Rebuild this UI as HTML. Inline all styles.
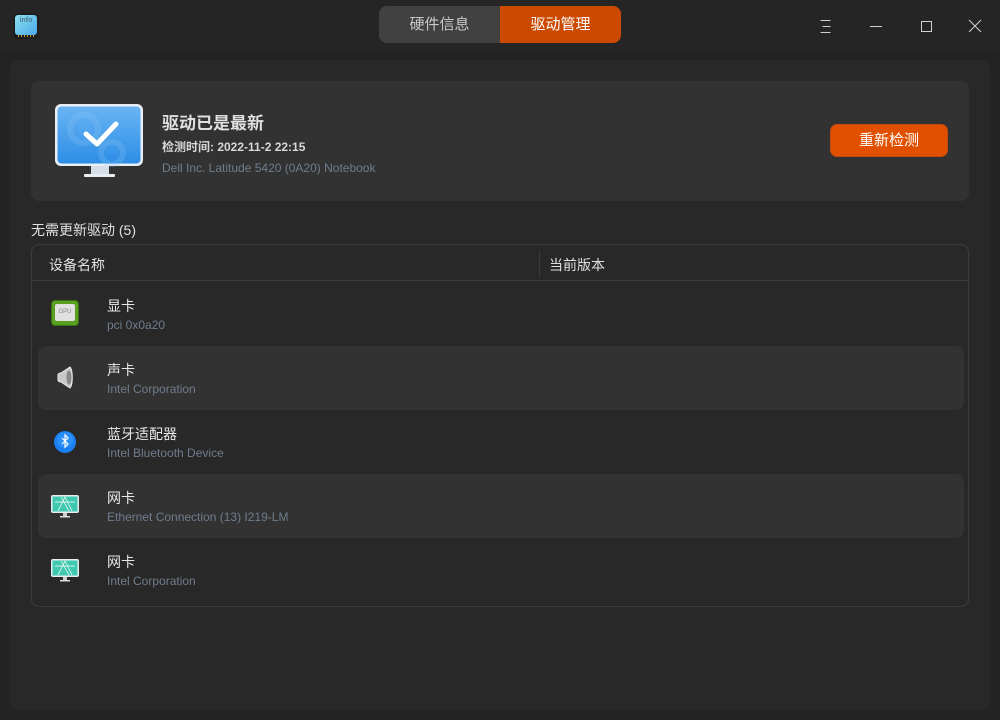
<!DOCTYPE html>
<html><head><meta charset="utf-8"><style>
*{margin:0;padding:0;box-sizing:border-box}
body{width:1000px;height:720px;background:#232323;font-family:"Liberation Sans","Noto Sans CJK SC",sans-serif;color:#dcdcdc;position:relative;overflow:hidden}
.tb{position:absolute;left:0;top:0;width:1000px;height:50px;background:#252525}
.panel{position:absolute;left:10px;top:60px;width:980px;height:650px;background:#282828;border-radius:8px}
.abs{position:absolute}
.seg{position:absolute;left:379px;top:6px;width:242px;height:37px;border-radius:8px;background:#414141;overflow:hidden}
.seg div{position:absolute;top:0;height:37px;line-height:37px;text-align:center;font-size:15px}
.card{position:absolute;left:31px;top:81px;width:938px;height:120px;background:#323232;border-radius:8px}
.btn{position:absolute;left:830px;top:124px;width:118px;height:33px;border-radius:7px;background:#e05000;border:1px solid #c04a10;color:#fff;font-size:15px;text-align:center;line-height:31px}
.tbl{position:absolute;left:31px;top:244px;width:938px;height:363px;border:1px solid #3d3d3d;border-radius:8px}
.row{position:absolute;left:6px;width:926px;height:64px;border-radius:8px}
.row.alt{background:#323232}
.n{position:absolute;left:69px;top:14px;font-size:14px;color:#e8e8e8}
.s{position:absolute;left:69px;top:36px;font-size:12px;color:#6f7d8e}
.ic{position:absolute;left:12px;top:16px;width:30px;height:30px}
</style></head><body>
<div class="tb"></div>
<div class="panel"></div>
<div class="abs" style="left:13px;top:13px;width:26px;height:26px;border-radius:5px;background:#1d1d1d"></div>
<div class="abs" style="left:15px;top:15px;width:22px;height:20px;border-radius:3px;background:linear-gradient(135deg,#8ee0f0,#4aa8e8);font-size:7px;color:#4a7a90;text-align:center;line-height:12px;font-weight:bold">info</div>
<div class="abs" style="left:18px;top:35px;width:16px;height:2px;background:repeating-linear-gradient(90deg,#c9a02a 0 1px,transparent 1px 3px)"></div>
<div class="seg"><div style="left:0;width:121px;color:#c8c8c8">硬件信息</div><div style="left:121px;width:121px;background:#cb4a00;color:#fff">驱动管理</div></div>
<svg class="abs" style="left:810px;top:15px" width="180" height="22" viewBox="0 0 180 22">
<g stroke="#d0d0d0" stroke-width="1" fill="none">
<path d="M10.5 5.5h10M12.5 11.5h8M10.5 17.5h10"/>
<path d="M60 11.5h12"/>
<rect x="111.5" y="6.5" width="10" height="10"/>
<path d="M159 5l12 12M171 5l-12 12"/>
</g></svg>
<div class="card"></div>
<svg class="abs" style="left:54px;top:103px" width="92" height="76" viewBox="0 0 92 76">
<defs><linearGradient id="g" x1="0" y1="0" x2="0" y2="1"><stop offset="0" stop-color="#6ab4f4"/><stop offset="1" stop-color="#2c8ee6"/></linearGradient></defs>
<rect x="1" y="1" width="88" height="62" rx="6" fill="#e8eef6"/>
<rect x="3.5" y="3.5" width="83" height="57" rx="4" fill="url(#g)"/>
<circle cx="30" cy="26" r="14" fill="none" stroke="#8cc4f4" stroke-width="6" opacity=".25"/>
<circle cx="58" cy="50" r="11" fill="none" stroke="#8cc4f4" stroke-width="6" opacity=".25"/>
<path d="M32 31l11 10 19-20" stroke="#fff" stroke-width="5" fill="none" stroke-linecap="round" stroke-linejoin="round"/>
<rect x="37" y="63" width="18" height="8" fill="#d8dee8"/>
<rect x="30" y="71" width="31" height="3" rx="1" fill="#e8eef6"/>
</svg>
<div class="abs" style="left:162px;top:109px;font-size:17px;font-weight:bold;color:#e0e0e0">驱动已是最新</div>
<div class="abs" style="left:162px;top:138px;font-size:12px;font-weight:bold;color:#d8d8d8">检测时间: 2022-11-2 22:15</div>
<div class="abs" style="left:162px;top:161px;font-size:12px;color:#6f7d8e">Dell Inc. Latitude 5420 (0A20) Notebook</div>
<div class="btn">重新检测</div>
<div class="abs" style="left:31px;top:220px;font-size:14px;color:#e0e0e0">无需更新驱动 (5)</div>
<div class="tbl">
<div class="abs" style="left:17px;top:10px;font-size:14px;color:#e0e0e0">设备名称</div>
<div class="abs" style="left:507px;top:6px;width:1px;height:26px;background:#3a3a3a"></div>
<div class="abs" style="left:517px;top:10px;font-size:14px;color:#e0e0e0">当前版本</div>
<div class="abs" style="left:0;top:35px;width:936px;height:1px;background:#3a3a3a"></div>
<div class="row" style="top:37px">
 <div class="ic"><div style="position:absolute;left:1px;top:2px;width:28px;height:26px;border-radius:4px;background:#5aa020;border:1px solid #3a7010"></div><div style="position:absolute;left:5px;top:6px;width:20px;height:17px;background:#e0e0e0;border-radius:2px;font-size:6px;color:#888;text-align:center;line-height:17px">GPU</div></div>
 <div class="n">显卡</div><div class="s">pci 0x0a20</div></div>
<div class="row alt" style="top:101px">
 <svg class="ic" viewBox="0 0 30 30"><path d="M8 13c0-1 1-2 3-2l9-6c3 3 3 18 0 21l-9-6c-2 0-3-1-3-2z" fill="#c8c8c8" stroke="#eee" stroke-width="1"/><ellipse cx="19" cy="15.5" rx="2.5" ry="7" fill="#888"/></svg>
 <div class="n">声卡</div><div class="s">Intel Corporation</div></div>
<div class="row" style="top:165px">
 <svg class="ic" viewBox="0 0 30 30"><circle cx="15" cy="16" r="11" fill="#1a7ff0"/><circle cx="15" cy="14" r="8" fill="#3ca0ff" opacity=".5"/><path d="M12 12l6 6-3 3v-12l3 3-6 6" stroke="#fff" stroke-width="1.2" fill="none"/></svg>
 <div class="n">蓝牙适配器</div><div class="s">Intel Bluetooth Device</div></div>
<div class="row alt" style="top:229px">
 <svg class="ic" viewBox="0 0 30 30"><rect x="1" y="5" width="28" height="18" rx="2" fill="#e8eef0"/><rect x="2.5" y="6.5" width="25" height="15" fill="#40c8b0"/><path d="M8 21l7-14 7 14M5 12h20M11 7l8 14" stroke="#fff" stroke-width=".7" fill="none"/><rect x="13" y="23" width="4" height="3" fill="#ccc"/><rect x="10" y="26" width="10" height="1.5" fill="#ddd"/></svg>
 <div class="n">网卡</div><div class="s">Ethernet Connection (13) I219-LM</div></div>
<div class="row" style="top:293px">
 <svg class="ic" viewBox="0 0 30 30"><rect x="1" y="5" width="28" height="18" rx="2" fill="#e8eef0"/><rect x="2.5" y="6.5" width="25" height="15" fill="#40c8b0"/><path d="M8 21l7-14 7 14M5 12h20M11 7l8 14" stroke="#fff" stroke-width=".7" fill="none"/><rect x="13" y="23" width="4" height="3" fill="#ccc"/><rect x="10" y="26" width="10" height="1.5" fill="#ddd"/></svg>
 <div class="n">网卡</div><div class="s">Intel Corporation</div></div>
</div>
</body></html>
